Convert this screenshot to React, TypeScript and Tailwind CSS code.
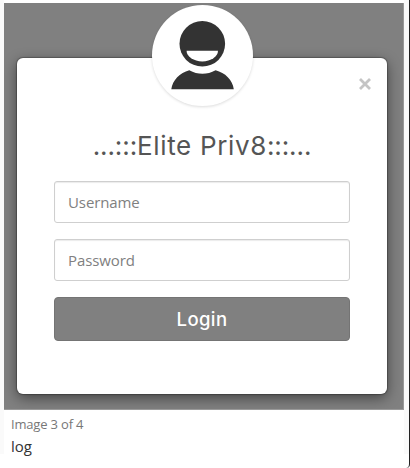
import React from "react";

function Avatar() {
  return (
    <div className="absolute left-[148px] top-[2px] z-10 h-[101px] w-[101px] rounded-full bg-white shadow-[0_1px_3px_rgba(0,0,0,0.14)]">
      <svg viewBox="0 0 101 101" className="h-full w-full" fill="#333">
        <circle cx="50.3" cy="38.8" r="22.8" />
        <path d="M34.600 45.800h31.400a15.700 10.600 0 0 1-31.400 0z" fill="#fff" />
        <path d="M37.300 65.200c8.500 4.700 17.800 4.700 26.300 0 9.500 2.500 17 9.500 18.200 19.100H19.300C20.500 75 27.800 67.700 37.300 65.200z" />
      </svg>
    </div>
  );
}

function Field({ label, type }: { label: string; type: string }) {
  return (
    <input
      type={type}
      placeholder={label}
      className="mb-4 block h-[42px] w-full rounded-[3px] border border-[#cfcfcf] bg-white px-[13px] font-['Open_Sans',sans-serif] text-[15px] tracking-[-0.1px] text-[#777] shadow-[inset_0_1px_1px_rgba(0,0,0,0.08)] outline-none placeholder:text-[#808080]"
    />
  );
}

export default function App() {
  return (
    <div className="relative h-[468px] w-[410px] overflow-hidden rounded-br-[4px] border-r border-[#222] bg-white">
      <div className="flex h-[454px] justify-between bg-[#fafafa]">
        <div className="w-1 shrink-0" />
        <main className="h-[465px] w-[400px] shrink-0 bg-white pt-[3px]">
          <section className="relative h-[407px] overflow-hidden border-b border-r border-[#999] bg-[#808080] px-[13px] pt-[55px]">
            <Avatar />
            <div className="relative h-[336px] w-[370px] rounded-[6px] bg-white px-[37px] shadow-[0_4px_14px_rgba(0,0,0,0.48),0_0_1px_1px_rgba(0,0,0,0.25)]">
              <button aria-label="Close" className="absolute right-[16.500px] top-[20px] h-[12px] w-[12px]">
                <svg viewBox="0 0 12 12" className="h-3 w-3" stroke="#c4c4c4" strokeWidth="2.800">
                  <path d="M1 1l10 10M11 1L1 11" />
                </svg>
              </button>
              <h1 className="flex h-[123px] items-end justify-center whitespace-nowrap pb-[17px] font-[Inter,sans-serif] text-[26px] leading-[36px] text-[#555] [font-feature-settings:'calt'_0]">
                <span className="tracking-[-0.1px]">...:::</span>
                <span className="tracking-[0.65px]">Elite Priv8</span>
                <span className="tracking-[-0.1px]">:::...</span>
              </h1>
              <Field label="Username" type="text" />
              <Field label="Password" type="password" />
              <button className="block h-[44px] w-full rounded-[4px] border border-[#747474] bg-[#808080] pt-[2px] font-[Inter,sans-serif] text-[18.500px] font-medium tracking-[0.4px] text-white">
                Login
              </button>
            </div>
          </section>
          <div className="pl-[7px] pt-[5px] font-['Open_Sans',sans-serif]">
            <p className="text-[13px] leading-[18px] tracking-[-0.18px] text-[#777]">Image 3 of 4</p>
            <p className="mt-[2px] text-[15px] leading-[22px] text-[#333]">log</p>
          </div>
        </main>
        <div className="w-[5px] shrink-0" />
      </div>
    </div>
  );
}
